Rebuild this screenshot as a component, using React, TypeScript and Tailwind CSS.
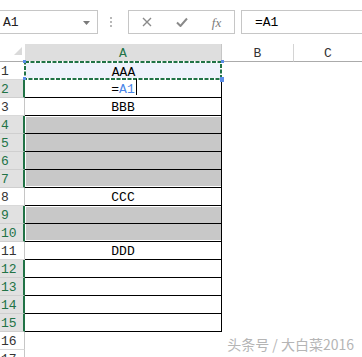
import React from "react";

const GREEN = "#217346";
const selectedHeader = new Set([2, 4, 5, 6, 7, 9, 10, 12, 13, 14, 15]);
const grayRows: Record<number, { first: boolean; last: boolean }> = {
  4: { first: true, last: false },
  5: { first: false, last: false },
  6: { first: false, last: false },
  7: { first: false, last: true },
  9: { first: true, last: false },
  10: { first: false, last: true },
};
const content: Record<number, string> = { 1: "AAA", 3: "BBB", 8: "CCC", 11: "DDD" };

function RowHeader({ r }: { r: number }) {
  const sel = selectedHeader.has(r);
  return (
    <div
      className={
        sel
          ? "w-[25px] h-full shrink-0 box-border flex items-center pt-[2px] pl-[1px] bg-[#e1e1e1] text-[#217346] border-b border-b-[#cfcfcf] border-r-2 border-r-[#217346]"
          : "w-[25px] h-full shrink-0 box-border flex items-center pt-[2px] pl-[1px] bg-white text-[#333333] border-b border-b-[#d9d9d9] border-r border-r-[#c6c6c6]"
      }
    >
      {r}
    </div>
  );
}

function CellA({ r }: { r: number }) {
  if (r > 15) return <div className="w-[197px] h-full shrink-0" />;
  const g = grayRows[r];
  if (g) {
    return (
      <div className="w-[197px] h-full shrink-0 box-border border-r border-b border-black bg-white">
        <div
          className={
            "ml-[1px] bg-[#c8c8c8] " +
            (g.first && g.last
              ? "mt-[1px] h-[15px]"
              : g.first
              ? "mt-[1px] h-[16px]"
              : g.last
              ? "h-[16px]"
              : "h-[17px]")
          }
        />
      </div>
    );
  }
  if (r === 1) {
    return (
      <div className="relative w-[197px] h-full shrink-0 box-border bg-[#eef2fb] flex items-center justify-center pt-[2px] text-black">
        AAA
        <svg
          className="absolute left-[-1px] top-[-1px]"
          width="198"
          height="19"
          viewBox="0 0 198 19"
        >
          <rect x="1" y="1" width="196" height="17" fill="none" stroke="#ffffff" strokeWidth="2" />
          <rect
            x="1"
            y="1"
            width="196"
            height="17"
            fill="none"
            stroke="#217346"
            strokeWidth="2"
            strokeDasharray="4 1.5"
          />
        </svg>
        <div className="absolute left-[-2px] top-[-2px] w-[3px] h-[3px] bg-[#5b8de8]" />
        <div className="absolute left-[-2px] top-[15px] w-[3px] h-[3px] bg-[#5b8de8]" />
        <div className="absolute right-[-2px] top-[-2px] w-[3px] h-[3px] bg-[#5b8de8]" />
        <div className="absolute right-[-2px] top-[15px] w-[4px] h-[5px] bg-[#5b8de8]" />
      </div>
    );
  }
  if (r === 2) {
    return (
      <div className="w-[197px] h-full shrink-0 box-border border-r border-b border-black bg-white flex items-center justify-center pt-[2px] text-black">
        <span className="relative">
          =<span className="text-[#4a86e8]">A1</span>
          <span className="absolute left-full ml-[1px] top-[-4px] w-px h-[16px] bg-black" />
        </span>
      </div>
    );
  }
  return (
    <div className="w-[197px] h-full shrink-0 box-border border-r border-b border-black bg-white flex items-center justify-center pt-[2px] text-black">
      {content[r] ?? ""}
    </div>
  );
}

export default function App() {
  const rows = Array.from({ length: 17 }, (_, i) => i + 1);
  return (
    <div
      className="relative w-[362px] h-[357px] overflow-hidden bg-white text-[13px] leading-none"
      style={{ fontFamily: '"Liberation Mono", "DejaVu Sans Mono", monospace' }}
    >
      {/* toolbar */}
      <div className="h-[44px] flex items-start pt-[10px]">
        <div className="w-[98px] h-[24px] box-border border border-l-0 border-[#c6c6c6] flex items-center justify-between pl-[3px] pr-[7px] pt-[1px] text-[#222222]">
          <span>A1</span>
          <svg width="7" height="4" viewBox="0 0 7 4">
            <path d="M0 0 H7 L3.5 4 Z" fill="#7a7a7a" />
          </svg>
        </div>
        <div className="ml-[12px] mt-[7px] flex flex-col gap-[2px]">
          <div className="w-[2px] h-[2px] bg-[#b8b8b8]" />
          <div className="w-[2px] h-[2px] bg-[#b8b8b8]" />
          <div className="w-[2px] h-[2px] bg-[#b8b8b8]" />
        </div>
        <div className="ml-[16px] w-[107px] h-[24px] box-border border border-[#c6c6c6] grid grid-cols-3 items-center justify-items-center">
          <svg width="10" height="10" viewBox="0 0 10 10">
            <path d="M1 1 L9 9 M9 1 L1 9" stroke="#8a8a8a" strokeWidth="1.4" />
          </svg>
          <svg width="12" height="10" viewBox="0 0 12 10">
            <path d="M1 5.5 L4.5 9 L11 1.5" stroke="#8a8a8a" strokeWidth="2" fill="none" />
          </svg>
          <span
            className="italic text-[13px] text-[#7a7a7a] pt-[1px]"
            style={{ fontFamily: '"Liberation Serif", serif' }}
          >
            fx
          </span>
        </div>
        <div className="ml-[6px] flex-1 h-[24px] box-border border border-r-0 border-[#c6c6c6] flex items-center pl-[13px] pt-[1px] text-black">
          =A1
        </div>
      </div>

      {/* column header */}
      <div className="flex h-[18px]">
        <div className="relative w-[25px] h-full shrink-0 box-border border-b border-[#ababab] bg-white">
          <svg className="absolute left-[14px] top-[3px]" width="8" height="8" viewBox="0 0 8 8">
            <path d="M8 0 V8 H0 Z" fill="#dadada" />
          </svg>
        </div>
        <div className="w-[197px] h-full shrink-0 box-border border-b border-r border-b-[#ababab] border-r-[#c6c6c6] bg-[#dedede] flex items-center justify-center pt-[2px] text-[#217346]">
          A
        </div>
        <div className="w-[72px] h-full shrink-0 box-border border-b border-r border-b-[#ababab] border-r-[#d4d4d4] flex items-center justify-center pt-[2px] text-[#333333]">
          B
        </div>
        <div className="flex-1 h-full box-border border-b border-[#ababab] flex items-center justify-center pt-[2px] text-[#333333]">
          C
        </div>
      </div>

      {/* rows */}
      {rows.map((r) => (
        <div key={r} className="flex h-[18px]">
          <RowHeader r={r} />
          <CellA r={r} />
          <div className="flex-1" />
        </div>
      ))}

      {/* watermark */}
      <div
        className="absolute right-[8px] bottom-[6px] text-[14px] text-[#b5b5b5] leading-none"
        style={{
          fontFamily: '"Noto Sans CJK SC", "Noto Sans", sans-serif',
          textShadow: "0 0 2px #ffffff",
        }}
      >
        头条号 / 大白菜2016
      </div>
    </div>
  );
}
